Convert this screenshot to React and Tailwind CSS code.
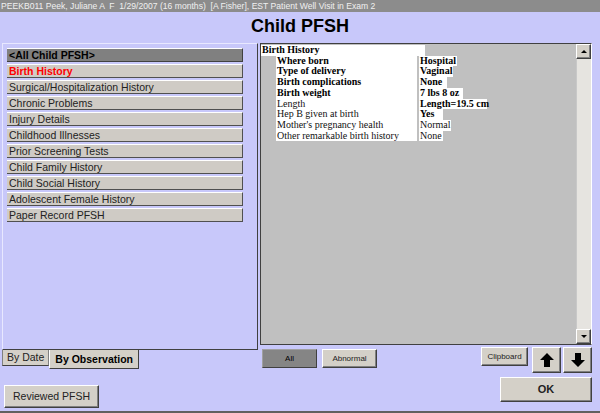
import React, { useState } from 'react'

const sections = [
  'Birth History',
  'Surgical/Hospitalization History',
  'Chronic Problems',
  'Injury Details',
  'Childhood Illnesses',
  'Prior Screening Tests',
  'Child Family History',
  'Child Social History',
  'Adolescent Female History',
  'Paper Record PFSH',
]

const birthRows = [
  { label: 'Where born', value: 'Hospital', bold: true, vw: 'w-[38px]' },
  { label: 'Type of delivery', value: 'Vaginal', bold: true, vw: 'w-[34px]' },
  { label: 'Birth complications', value: 'None', bold: true, vw: 'w-[28px]' },
  { label: 'Birth weight', value: '7 lbs 8 oz', bold: true, vw: 'w-[44px]' },
  { label: 'Length', value: 'Length=19.5 cm', bold: false, boldValue: true, vw: 'w-[68px]' },
  { label: 'Hep B given at birth', value: 'Yes', bold: false, boldValue: true, vw: 'w-[24px]' },
  { label: "Mother's pregnancy health", value: 'Normal', bold: false, vw: 'w-[32px]' },
  { label: 'Other remarkable birth history', value: 'None', bold: false, vw: 'w-[24px]' },
]

const btn = 'bg-[#d4d0c8] border border-t-white border-l-white border-r-[#404040] border-b-[#404040] shadow-[inset_-1px_-1px_0_#808080]'

const App = () => {
  const [tab, setTab] = useState('obs')

  return (
    <div className="w-[600px] h-[413px] bg-[#c8c8fa] flex flex-col font-['Liberation_Sans',Arial,sans-serif] overflow-hidden">
      <div className="h-[12px] bg-[#8c8c8c] text-[#f0f0f0] text-[8.6px] leading-[12px] pl-[1px] whitespace-pre">
        PEEKB011 Peek, Juliane A  F  1/29/2007 (16 months)  [A Fisher], EST Patient Well Visit in Exam 2
      </div>

      <h1 className="text-center font-bold text-[18px] leading-[22px] mt-[3px] text-black">Child PFSH</h1>

      <div className="flex mt-[6px] px-[2px]">
        {/* left column */}
        <div className="w-[256px] flex flex-col">
          <div className="h-[307px] border border-t-[#e8e8ff] border-l-[#e8e8ff] border-r-[#404040] border-b-[#404040] pt-[4px] pl-[4px] flex flex-col gap-[2px]">
            <div className="w-[236px] h-[14px] bg-[#808080] border-b border-r border-[#404040] border-t-white border-t text-[10.5px] leading-[12px] font-bold text-black pl-[2px]">
              &lt;All Child PFSH&gt;
            </div>
            {sections.map((s, i) => (
              <div
                key={s}
                className={
                  'w-[236px] h-[14px] bg-[#cfcbc5] border-t border-t-white border-b border-r border-[#505050] text-[10.5px] leading-[12px] pl-[2px] ' +
                  (i === 0 ? 'text-[#ff0000] font-bold' : 'text-[#222]')
                }
              >
                {s}
              </div>
            ))}
          </div>
          <div className="flex items-start">
            <div
              onClick={() => setTab('date')}
              className="h-[16px] px-[4px] bg-[#d4d0c8] border border-t-0 border-[#808080] border-b-[#404040] text-[10.5px] leading-[15px] text-[#222]"
            >
              By Date
            </div>
            <div
              onClick={() => setTab('obs')}
              className="h-[19px] px-[5px] bg-[#d4d0c8] border border-t-0 border-l-white border-r-[#404040] border-b-[#404040] text-[10.5px] leading-[18px] font-bold text-black"
            >
              By Observation
            </div>
          </div>
          <div className="mt-[14px] ml-[2px]">
            <button className={btn + ' w-[95px] h-[23px] text-[10.5px] text-[#222]'}>Reviewed PFSH</button>
          </div>
        </div>

        {/* right column */}
        <div className="flex-1 ml-[2px] mr-[6px] flex flex-col">
          <div className="h-[302px] bg-[#c0c0c0] border border-t-[#404040] border-l-[#404040] border-r-white border-b-[#404040] flex">
            <div className="flex-1 pt-[1px] font-['Liberation_Serif','Times_New_Roman',serif] text-[10px] leading-[10.7px] text-black">
              <div className="w-[164px] bg-white font-bold pl-[1px]">Birth History</div>
              {birthRows.map((r) => (
                <div key={r.label} className="flex">
                  <div className={'ml-[15px] w-[141px] bg-white pl-[1px] ' + (r.bold ? 'font-bold' : 'text-[#111]')}>{r.label}</div>
                  <div className="w-[2px]" />
                  <div className={'bg-white pl-[1px] whitespace-nowrap ' + r.vw + (r.bold || r.boldValue ? ' font-bold' : ' text-[#111]')}>{r.value}</div>
                </div>
              ))}
            </div>
            {/* scrollbar */}
            <div className="w-[15px] bg-[#e6e4e0] flex flex-col justify-between">
              <div className={btn + ' h-[15px] flex items-center justify-center'}>
                <div className="w-0 h-0 border-l-[3px] border-r-[3px] border-b-[3px] border-l-transparent border-r-transparent border-b-black" />
              </div>
              <div className="flex-1 border-l border-[#c8c8c8]" />
              <div className={btn + ' h-[15px] flex items-center justify-center'}>
                <div className="w-0 h-0 border-l-[3px] border-r-[3px] border-t-[3px] border-l-transparent border-r-transparent border-t-black" />
              </div>
            </div>
          </div>

          <div className="flex mt-[2px]">
            <div className="flex gap-[5px] pt-[2px] pl-[2px]">
              <button className="w-[55px] h-[19px] bg-[#858585] border border-t-[#a0a0a0] border-l-[#a0a0a0] border-r-[#404040] border-b-[#404040] text-[8px] text-black">All</button>
              <button className={btn + ' w-[55px] h-[19px] text-[8px] text-[#222]'}>Abnormal</button>
            </div>
            <div className="ml-auto flex flex-col items-end">
              <div className="flex gap-[2px] items-start">
                <button className={btn + ' w-[47px] h-[19px] text-[8px] text-[#222] mr-[2px]'}>Clipboard</button>
                <button className={btn + ' w-[29px] h-[26px] flex items-center justify-center'}>
                  <svg width="16" height="16" viewBox="0 0 16 16"><path d="M8 1 L15 8 L11 8 L11 15 L5 15 L5 8 L1 8 Z" fill="black" /></svg>
                </button>
                <button className={btn + ' w-[29px] h-[26px] flex items-center justify-center'}>
                  <svg width="16" height="16" viewBox="0 0 16 16"><path d="M8 15 L15 8 L11 8 L11 1 L5 1 L5 8 L1 8 Z" fill="black" /></svg>
                </button>
              </div>
              <button className={btn + ' mt-[4px] w-[92px] h-[25px] text-[11px] font-bold text-[#222]'}>OK</button>
            </div>
          </div>
        </div>
      </div>

      <div className="mt-auto h-[2px] bg-[#606060]" />
    </div>
  )
}

export default App
